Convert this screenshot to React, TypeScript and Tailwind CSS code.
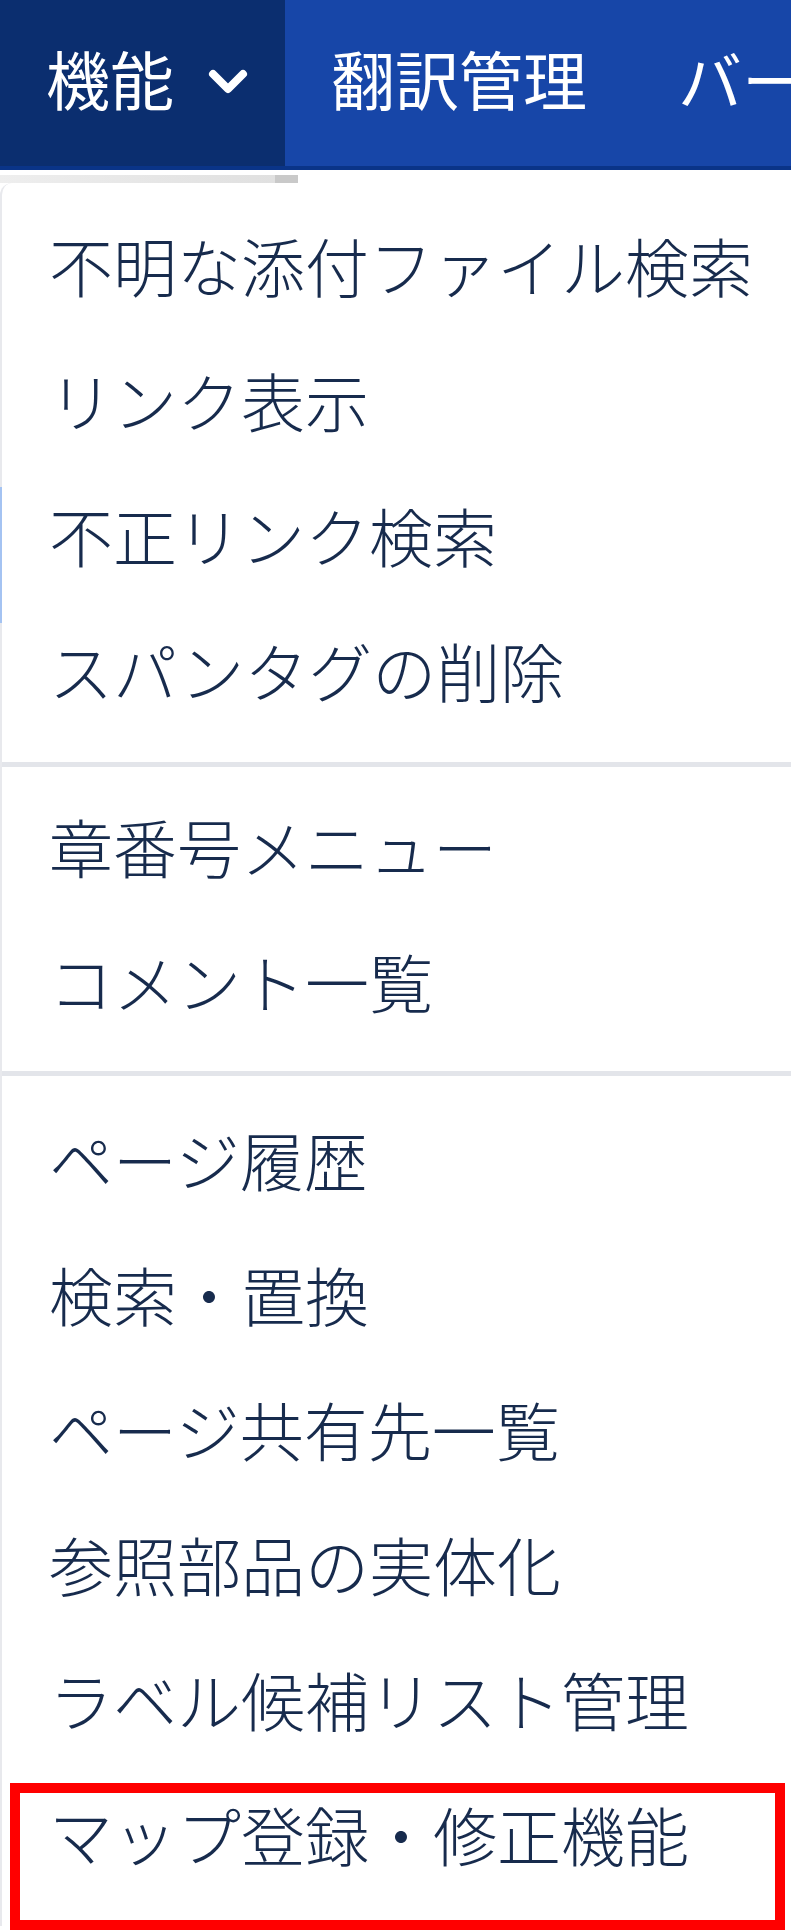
import React from "react";

const sections: string[][] = [
  ["不明な添付ファイル検索", "リンク表示", "不正リンク検索", "スパンタグの削除"],
  ["章番号メニュー", "コメント一覧"],
  [
    "ページ履歴",
    "検索・置換",
    "ページ共有先一覧",
    "参照部品の実体化",
    "ラベル候補リスト管理",
    "マップ登録・修正機能",
  ],
];

function Chevron() {
  return (
    <svg width="40" height="30" viewBox="0 0 40 30" fill="none">
      <path
        d="M5 8 L20 23 L35 8"
        stroke="white"
        strokeWidth="8"
        strokeLinecap="round"
        strokeLinejoin="round"
      />
    </svg>
  );
}

function MenuItem({ label, marked }: { label: string; marked?: boolean }) {
  return (
    <div className="relative h-[135px] pl-[47px] text-[64px] font-light leading-[121px] text-[#172b4d] whitespace-nowrap">
      {label}
      {marked && (
        <div className="absolute left-[8px] top-[10px] w-[775px] h-[147px] border-[10px] border-[#ff0000]" />
      )}
    </div>
  );
}

export default function App() {
  return (
    <div className="relative w-[791px] h-[1930px] overflow-hidden bg-white font-['Noto_Sans_CJK_JP',sans-serif]">
      {/* top navigation */}
      <nav className="flex h-[170px] bg-[#1746a8] border-b-[4px] border-[#0a3488] text-white text-[64px] leading-none whitespace-nowrap">
        <div className="flex items-center w-[285px] shrink-0 bg-[#0b2e6f] pl-[46px] pb-[12px]">
          <span>機能</span>
          <span className="ml-[34px] mt-[8px]">
            <Chevron />
          </span>
        </div>
        <div className="flex items-center pl-[46px] pb-[12px] gap-[91px]">
          <span>翻訳管理</span>
          <span>バージョン</span>
        </div>
      </nav>

      <div className="h-[5px]" />
      <div className="flex h-[8px]">
        <div className="w-[275px] bg-gradient-to-r from-[#eeeeee] to-[#e0e0e0]" />
        <div className="w-[23px] bg-[#c9c9c9]" />
      </div>

      {/* dropdown menu */}
      <div className="relative rounded-tl-[12px] border-l-2 border-[#e8e9ed] bg-white">
        <div className="absolute left-[-2px] top-[304px] w-[2px] h-[136px] bg-[#a4c3f2]" />
        <div className="pt-[21px] pb-[18px]">
          {sections[0].map((s) => (
            <MenuItem key={s} label={s} />
          ))}
        </div>
        <div className="h-[5px] bg-[#e3e5ea]" />
        <div className="pt-[18px] pb-[16px]">
          {sections[1].map((s) => (
            <MenuItem key={s} label={s} />
          ))}
        </div>
        <div className="h-[5px] bg-[#e3e5ea]" />
        <div className="pt-[22px] pb-[18px]">
          {sections[2].map((s, i) => (
            <MenuItem key={s} label={s} marked={i === sections[2].length - 1} />
          ))}
        </div>
      </div>
    </div>
  );
}
